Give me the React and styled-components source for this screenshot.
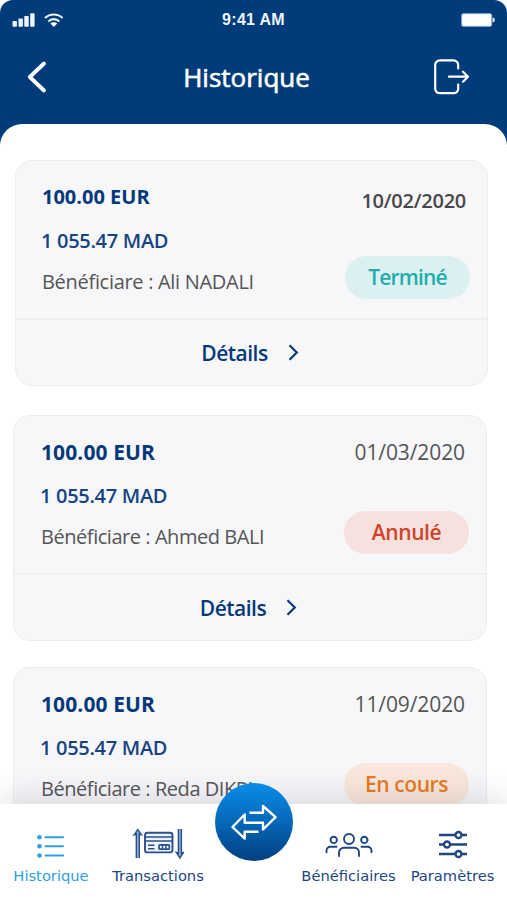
import React from "react";
import styled, { createGlobalStyle } from "styled-components";

const GlobalStyle = createGlobalStyle`
  * {
    box-sizing: border-box;
  }

  body {
    margin: 0;
    background: #fff;
    font-family: "Open Sans", "Noto Sans", sans-serif;
  }
`;

const Screen = styled.div`
  position: relative;
  display: flex;
  flex-direction: column;
  width: 507px;
  height: 900px;
  overflow: hidden;
  background: #fff;
`;

const Top = styled.div`
  flex: none;
  height: 145px;
  background: #003c7a;
  border-radius: 13px 13px 0 0;
`;

const StatusBar = styled.div`
  display: grid;
  grid-template-columns: 1fr auto 1fr;
  align-items: center;
  height: 40px;
  padding: 0 12px;
  color: #eef5ff;
`;

const StatusIcons = styled.div`
  display: flex;
  align-items: center;
  gap: 9px;
`;

const Time = styled.span`
  font-family: "Liberation Sans", Arial, sans-serif;
  font-size: 16px;
  font-weight: 700;
  letter-spacing: 0.3px;
`;

const Battery = styled.svg`
  justify-self: end;
`;

const Header = styled.header`
  display: grid;
  grid-template-columns: 60px 1fr 60px;
  align-items: center;
  height: 74px;
  padding: 0 22px;
`;

const Title = styled.h1`
  margin: 0;
  padding-right: 14px;
  font-size: 26px;
  font-weight: 400;
  line-height: 74px;
  color: #fff;
  text-align: center;
  -webkit-text-stroke: 0.6px #fff;
`;

const IconButton = styled.button`
  display: flex;
  padding: 0 0 0 ${(props) => (props.$end ? 9 : 0)}px;
  border: 0;
  background: none;
`;

const Sheet = styled.main`
  flex: 1;
  min-height: 0;
  margin-top: -21px;
  padding: 36px 20px 0 13px;
  overflow: hidden;
  background: #fff;
  border-radius: 22px 22px 0 0;
`;

const Card = styled.article`
  width: ${(props) => (props.$shift ? 473 : 474)}px;
  height: 226px;
  margin: 0 0 ${(props) => props.$gap || 26}px ${(props) => props.$shift || 0}px;
  background: #f7f7fa;
  border: 1px solid #ededf0;
  border-radius: 17px;
`;

const CardBody = styled.div`
  display: flex;
  justify-content: space-between;
  height: 159px;
  padding: 16px 17px 0 ${(props) => (props.$first ? 26 : 27)}px;
  border-bottom: 2px solid #efeff2;
`;

const Amounts = styled.div`
  display: flex;
  flex-direction: column;
  white-space: nowrap;
`;

const Amount = styled.strong`
  font-size: ${(props) => (props.$compact ? 20 : 21)}px;
  font-weight: 700;
  line-height: 40px;
  letter-spacing: ${(props) => (props.$compact ? 0 : 0.1)}px;
  color: #06397a;
`;

const Converted = styled.span`
  margin-left: -1px;
  font-size: 20px;
  font-weight: 600;
  line-height: 48px;
  letter-spacing: -0.3px;
  color: #164482;
`;

const Beneficiary = styled.span`
  font-size: 20px;
  line-height: 34px;
  letter-spacing: ${(props) => (props.$first ? -0.3 : -0.45)}px;
  color: #555558;
`;

const Side = styled.div`
  display: flex;
  flex-direction: column;
  align-items: flex-end;
`;

const DateText = styled.time`
  margin-top: ${(props) => (props.$strong ? 4 : 0)}px;
  padding-right: 4px;
  font-size: ${(props) => (props.$strong ? 20 : 21)}px;
  font-weight: ${(props) => (props.$strong ? 600 : 400)};
  line-height: 40px;
  letter-spacing: ${(props) => (props.$strong ? -0.25 : -0.1)}px;
  color: ${(props) => (props.$strong ? "#48484b" : "#555558")};
`;

const statusColors = {
  done: { text: "#22adad", background: "#dcf0f1" },
  cancelled: { text: "#d04329", background: "#f6e1de" },
  pending: { text: "#e57a25", background: "#fae7db" },
};

const Status = styled.span`
  width: 125px;
  height: 43px;
  margin-top: ${(props) => (props.$lifted ? 35 : 39)}px;
  font-size: 21px;
  font-weight: 600;
  line-height: 43px;
  letter-spacing: ${(props) => (props.$lifted ? -0.85 : -0.4)}px;
  text-align: center;
  color: ${(props) => statusColors[props.$kind].text};
  background: ${(props) => statusColors[props.$kind].background};
  border-radius: 22px;
`;

const Details = styled.button`
  display: flex;
  align-items: center;
  justify-content: center;
  gap: 20px;
  width: 100%;
  height: 65px;
  padding: 0 3px 0 0;
  border: 0;
  background: none;
  font-family: inherit;
  font-size: 21px;
  font-weight: 600;
  letter-spacing: -0.5px;
  color: #06397a;
`;

const TabBar = styled.nav`
  position: absolute;
  left: 0;
  right: 0;
  bottom: 0;
  display: grid;
  grid-template-columns: 102px 112px 80px 109px 99px;
  height: 96px;
  background: #fff;
  box-shadow: 0 -6px 30px rgba(60, 60, 80, 0.16);
`;

const Tab = styled.a`
  display: flex;
  flex-direction: column;
  align-items: center;
  padding-top: 20px;
  font-family: "DejaVu Sans", Verdana, sans-serif;
  font-size: 14.7px;
  line-height: 20px;
  color: ${(props) => (props.$active ? "#2f9fe0" : "#1d4683")};
  white-space: nowrap;

  svg {
    margin-bottom: 2px;
  }
`;

const TransferButton = styled.button`
  display: flex;
  align-items: center;
  justify-content: center;
  width: 78px;
  height: 78px;
  margin: -21px 0 0 1px;
  padding: 0;
  border: 0;
  border-radius: 50%;
  background: linear-gradient(to bottom, #0a8de8, #0568b9 50%, #023f80);
`;

const transactions = [
  {
    id: 1,
    name: "Ali NADALI",
    date: "10/02/2020",
    status: "Terminé",
    kind: "done",
    first: true,
  },
  {
    id: 2,
    name: "Ahmed BALI",
    date: "01/03/2020",
    status: "Annulé",
    kind: "cancelled",
  },
  {
    id: 3,
    name: "Reda DIKRI",
    date: "11/09/2020",
    status: "En cours",
    kind: "pending",
  },
];

function SignalIcon() {
  return (
    <svg width="23" height="14" viewBox="0 0 23 14" fill="#eef5ff">
      <rect x="0.5" y="8" width="4.4" height="5.7" rx="0.7" />
      <rect x="6.5" y="5.5" width="4.4" height="8.2" rx="0.7" />
      <rect x="12.3" y="3" width="4.4" height="10.7" rx="0.7" />
      <rect x="18.2" y="0.3" width="4.4" height="13.4" rx="0.7" />
    </svg>
  );
}

function WifiIcon() {
  return (
    <svg width="20" height="14" viewBox="0 0 20 14" fill="none">
      <path
        d="M1 5C6 0.3 13.6 0.3 18.6 5M4.3 8.4C7.4 5.3 12.2 5.3 15.3 8.4"
        stroke="#eef5ff"
        strokeWidth="2.1"
      />
      <path d="M6.4 10.6a4.8 4.8 0 0 1 6.8 0L9.8 13.9Z" fill="#fff" />
    </svg>
  );
}

function BatteryIcon() {
  return (
    <Battery width="34" height="14" viewBox="0 0 34 14">
      <rect x="0.7" y="0.7" width="30" height="12.6" rx="1.5" fill="#fff" stroke="#8fadd0" />
      <path d="M31.5 4.6a2.4 2.4 0 0 1 0 4.8Z" fill="#d7e4f3" />
    </Battery>
  );
}

function LogoutIcon() {
  return (
    <svg width="36" height="36" viewBox="0 0 36 36" fill="none" stroke="#fff" strokeWidth="2.2">
      <path
        d="M24.2 9.4V6a4.6 4.6 0 0 0-4.6-4.6H5.8A4.6 4.6 0 0 0 1.2 6v23.6a4.6 4.6 0 0 0 4.6 4.6h13.8a4.6 4.6 0 0 0 4.6-4.6v-4"
        strokeLinecap="round"
      />
      <path d="M15 17.7h18.5M29 12.7l5 5-5 5" strokeLinecap="round" strokeLinejoin="round" />
    </svg>
  );
}

function ListIcon() {
  return (
    <svg width="30" height="40" viewBox="0 0 30 40" fill="#2f9fe0">
      <circle cx="3.5" cy="13.3" r="2.3" />
      <circle cx="3.5" cy="22.3" r="2.3" />
      <circle cx="3.5" cy="31.5" r="2.3" />
      <path
        d="M9.5 13.3h17.5M9.5 22.3h17.5M9.5 31.5h17.5"
        stroke="#2f9fe0"
        strokeWidth="2.1"
        strokeLinecap="round"
      />
    </svg>
  );
}

function CardTransferIcon() {
  return (
    <svg width="52" height="40" viewBox="0 0 52 40" fill="none" stroke="#28508c" strokeWidth="1.4">
      <path d="M4.3 34V10L2.2 10.8 5.8 5.4l3.6 5.4L7.3 10v24" fill="#8fa9cd" />
      <path d="M46.4 5v24.2l-2.1-.8L47.9 34l3.6-5.6-2.1.8V5" fill="#8fa9cd" />
      <rect x="13" y="8.8" width="27.5" height="19.6" rx="2.5" fill="#eef3f9" strokeWidth="1.9" />
      <path d="M13 13h27.5M13 17h27.5" strokeWidth="1.7" />
      <path d="M16 21.3h6.5M16 24.7h6.5" />
      <rect x="27" y="20.8" width="10.3" height="4.4" rx="1" strokeWidth="1.7" />
      <path d="M30.5 20.8v4.4M33.9 20.8v4.4" />
    </svg>
  );
}

function TransferIcon() {
  return (
    <svg
      width="46"
      height="36"
      viewBox="0 0 46 36"
      fill="none"
      stroke="#fff"
      strokeWidth="2.4"
      strokeLinejoin="round"
    >
      <path d="M18.5 8.7H32V2l12.5 11.2L32 25.5v-6.7H13.7v-8.3L1.5 23l12.2 11.6v-6.9h13.8" />
    </svg>
  );
}

function PeopleIcon() {
  return (
    <svg
      width="48"
      height="40"
      viewBox="0 0 48 40"
      fill="none"
      stroke="#1d4683"
      strokeWidth="1.9"
      strokeLinecap="round"
    >
      <circle cx="24" cy="15" r="5" />
      <circle cx="8.7" cy="15.9" r="3.2" />
      <circle cx="39.3" cy="15.9" r="3.2" />
      <path d="M14 32v-3.4a4.8 4.8 0 0 1 4.8-4.8h10.4a4.8 4.8 0 0 1 4.8 4.8V32" />
      <path d="M1.5 28.3v-1.7a3.8 3.8 0 0 1 3.8-3.8h6.2M46.5 28.3v-1.7a3.8 3.8 0 0 0-3.8-3.8h-6.2" />
    </svg>
  );
}

function SlidersIcon() {
  return (
    <svg width="30" height="40" viewBox="0 0 30 40" stroke="#1d4683" strokeWidth="2.3" fill="#fff">
      <path d="M1 11h28M1 20.5h28M1 30h28" />
      <circle cx="20.5" cy="11" r="3" />
      <circle cx="9" cy="20.5" r="3" />
      <circle cx="20.5" cy="30" r="3" />
    </svg>
  );
}

function Transaction({ name, date, status, kind, first }) {
  return (
    <Card $shift={first ? 2 : 0} $gap={first ? 29 : 26}>
      <CardBody $first={first}>
        <Amounts>
          <Amount $compact={first}>100.00 EUR</Amount>
          <Converted>1 055.47 MAD</Converted>
          <Beneficiary $first={first}>Bénéficiare : {name}</Beneficiary>
        </Amounts>
        <Side>
          <DateText $strong={first}>{date}</DateText>
          <Status $kind={kind} $lifted={first}>
            {status}
          </Status>
        </Side>
      </CardBody>
      <Details>
        Détails
        <svg width="11" height="17" viewBox="0 0 11 17" fill="none">
          <path d="M1.5 1.3l7.3 7.2-7.3 7.2" stroke="#06397a" strokeWidth="2.2" />
        </svg>
      </Details>
    </Card>
  );
}

function App() {
  return (
    <Screen>
      <GlobalStyle />
      <Top>
        <StatusBar>
          <StatusIcons>
            <SignalIcon />
            <WifiIcon />
          </StatusIcons>
          <Time>9:41 AM</Time>
          <BatteryIcon />
        </StatusBar>
        <Header>
          <IconButton aria-label="Retour">
            <svg width="30" height="34" viewBox="0 0 30 34" fill="none">
              <path
                d="M22 3.5L7.8 17 22 30.5"
                stroke="#fff"
                strokeWidth="3.8"
                strokeLinecap="round"
                strokeLinejoin="round"
              />
            </svg>
          </IconButton>
          <Title>Historique</Title>
          <IconButton $end aria-label="Déconnexion">
            <LogoutIcon />
          </IconButton>
        </Header>
      </Top>
      <Sheet>
        {transactions.map((item) => (
          <Transaction key={item.id} {...item} />
        ))}
      </Sheet>
      <TabBar>
        <Tab $active>
          <ListIcon />
          Historique
        </Tab>
        <Tab>
          <CardTransferIcon />
          Transactions
        </Tab>
        <TransferButton aria-label="Transfert">
          <TransferIcon />
        </TransferButton>
        <Tab>
          <PeopleIcon />
          Bénéficiaires
        </Tab>
        <Tab>
          <SlidersIcon />
          Paramètres
        </Tab>
      </TabBar>
    </Screen>
  );
}

export default App;
